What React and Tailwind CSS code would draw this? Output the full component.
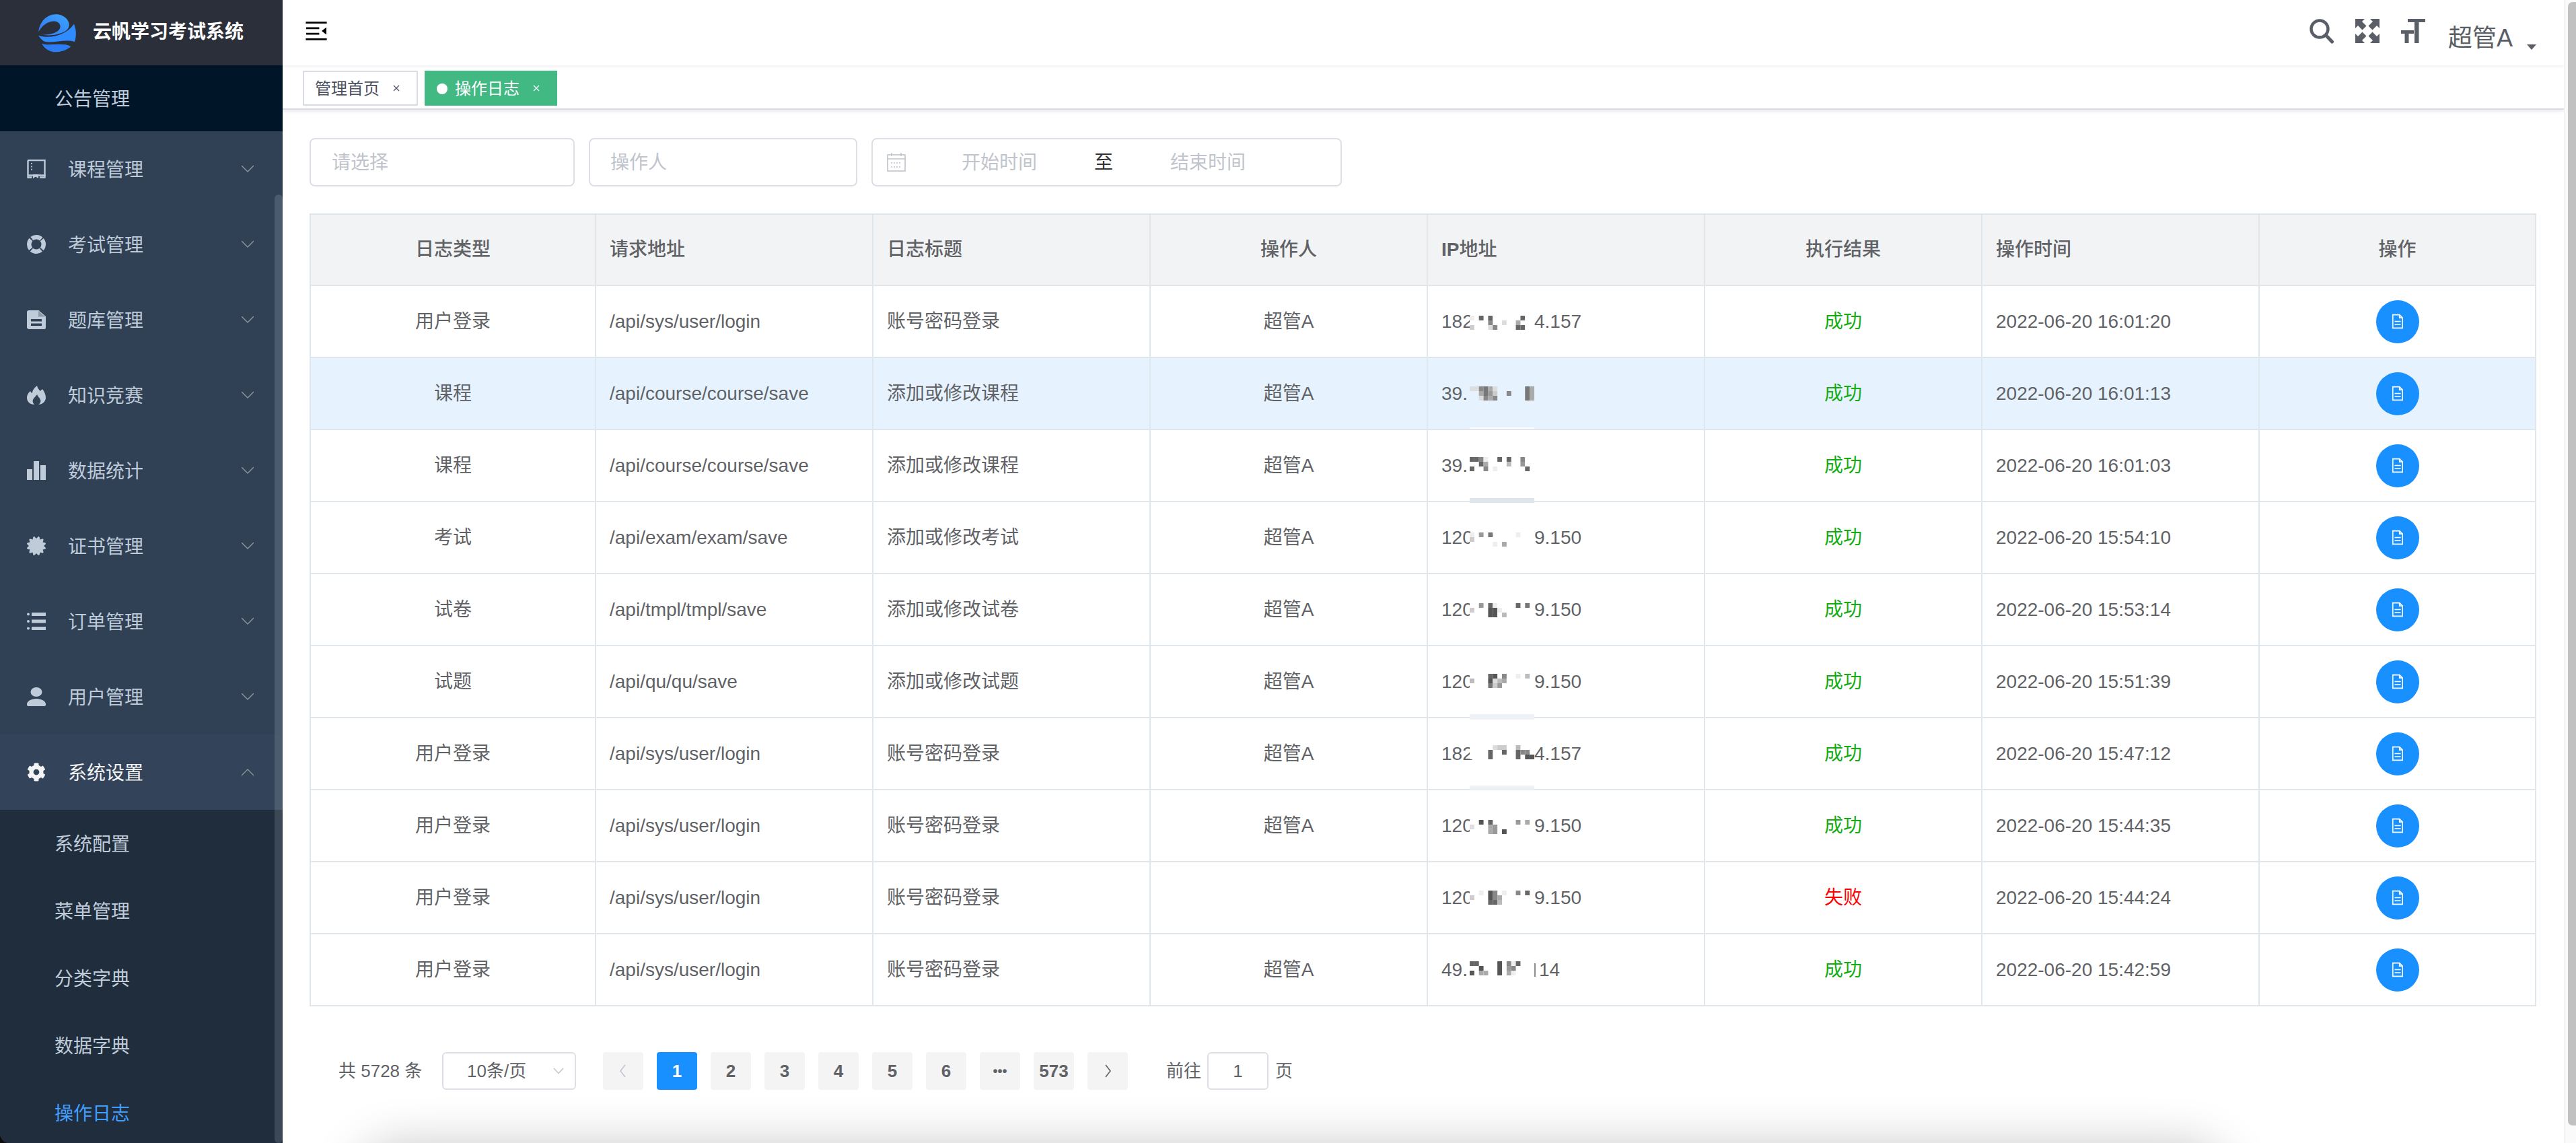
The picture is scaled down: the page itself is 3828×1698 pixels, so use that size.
import React from "react";
import { FaCertificate, FaCog } from "react-icons/fa";

const Chevron = ({ up }) => (
  <svg width="18" height="12" viewBox="0 0 18 12" fill="none" stroke="#909399" strokeWidth="1.4">
    <polyline points={up ? "0,11 9,2 18,11" : "0,1 9,10 18,1"} />
  </svg>
);

const IconBook = () => (
  <svg width="28" height="28" viewBox="0 0 28 28" fill="none" stroke="#bfcbd9" strokeWidth="2.4">
    <path d="M1.5 24V2.5a1.5 1.5 0 0 1 1.5-1.5h23.500v22.500H1.500" />
    <path d="M7 5v13" strokeDasharray="2 2.4" strokeWidth="1.8" />
    <path d="M9 22h8v6l-4-2.400L9 28z" fill="#bfcbd9" stroke="none" />
    <path d="M1.500 24v2.500h6M19 26.500h7.500V23" />
  </svg>
);
const IconExam = () => (
  <svg width="28" height="28" viewBox="0 0 28 28" fill="none" stroke="#bfcbd9" strokeWidth="6.5">
    <circle cx="14" cy="14" r="10.75" strokeDasharray="14.9 2" transform="rotate(-40 14 14)" />
  </svg>
);
const IconFile = () => (
  <svg width="28" height="28" viewBox="0 0 28 28" fill="#bfcbd9">
    <path fillRule="evenodd" d="M3 0h14.500L28 9v16.500a2.500 2.500 0 0 1-2.500 2.500h-22.500a3 3 0 0 1-3-2.500V3a3 3 0 0 1 3-3zM6 13v3.500h16V13zM6 19.500v3.500h16v-3.500z" />
    <path d="M17 1v8.500h10z" fill="#304156" opacity="0.35" />
  </svg>
);
const IconFire = () => (
  <svg width="28" height="28" viewBox="0 0 28 28" fill="#bfcbd9">
    <path d="M15 0C16 4 18 6 20 8C21 6.500 22 6 23 5C26 9 28 13 28 18C28 24 22 28 17.500 28C20 26 21 23 20 20.500C19 18 16 16 15 13C14 15 11 17 9 20.500C8 23 9 26 11 28C5 28 0 24 0 18C0 13 3 10 5 8C6 10 7 11 8 11C8 7 11 3 15 0Z" />
  </svg>
);
const IconBars = () => (
  <svg width="28" height="28" viewBox="0 0 28 28" fill="#bfcbd9">
    <rect x="0" y="12" width="8" height="17" />
    <rect x="10" y="0" width="8" height="29" />
    <rect x="20" y="6" width="8" height="23" />
  </svg>
);
const IconList = () => (
  <svg width="28" height="28" viewBox="0 0 28 28" fill="#bfcbd9">
    <circle cx="2" cy="3.5" r="2" />
    <circle cx="2" cy="14" r="2" />
    <circle cx="2" cy="24.5" r="2" />
    <rect x="7" y="1" width="21" height="5" />
    <rect x="7" y="11.5" width="21" height="5" />
    <rect x="7" y="22" width="21" height="5" />
  </svg>
);
const IconUser = () => (
  <svg width="28" height="28" viewBox="0 0 28 28" fill="#bfcbd9">
    <ellipse cx="14" cy="7" rx="8.500" ry="7" />
    <path d="M0 25c0-4 6-8 14-8s14 4 14 8v1a2 2 0 0 1-2 2H2a2 2 0 0 1-2-2z" />
  </svg>
);

const Logo = () => (
  <svg width="60" height="60" viewBox="50 20 180 180">
    <defs>
      <linearGradient id="lg1" x1="0" y1="1" x2="1" y2="0">
        <stop offset="0" stopColor="#2f74f0" />
        <stop offset="1" stopColor="#3fa6ff" />
      </linearGradient>
    </defs>
    <path d="M54 105C58 60 90 28 130 27C165 27 192 50 190 78C188 95 170 108 140 115C120 120 95 122 74 118C100 118 132 112 146 95C156 82 150 62 130 58C100 54 70 75 54 105Z" fill="url(#lg1)" />
    <path d="M54 121C100 136 172 125 212 70C224 100 222 125 215 149C170 135 110 160 76 146C66 138 58 130 54 121Z" fill="#2f8cff" />
    <path d="M68 157C100 170 160 150 198 170C180 186 155 195 130 195C105 195 80 180 68 157Z" fill="#2b7df5" />
  </svg>
);

const menu = [
  { t: "课程管理", i: <IconBook /> },
  { t: "考试管理", i: <IconExam /> },
  { t: "题库管理", i: <IconFile /> },
  { t: "知识竞赛", i: <IconFire /> },
  { t: "数据统计", i: <IconBars /> },
  { t: "证书管理", i: <FaCertificate size={28} color="#bfcbd9" /> },
  { t: "订单管理", i: <IconList /> },
  { t: "用户管理", i: <IconUser /> },
];

const Sidebar = () => (
  <div className="relative w-[420px] h-[1698px] shrink-0 bg-[#0c0c0c]">
    <div className="relative h-full overflow-hidden rounded-bl-[14px] bg-[#304156] text-[28px] text-[#bfcbd9]">
      <div className="h-[97px] bg-[#2b2f3a] flex items-center pl-[56px]">
        <Logo />
        <span className="ml-[22px] mb-[2px] text-white font-semibold text-[28px]">云帆学习考试系统</span>
      </div>
      <div className="h-[98px] bg-[#001528] flex items-center pl-[81px] pt-[3px]">公告管理</div>
      {menu.map((m) => (
        <div key={m.t} className="h-[112px] flex items-center pl-[40px] pr-[43px]">
          <span className="w-[28px] h-[28px] flex items-center justify-center">{m.i}</span>
          <span className="ml-[33px] flex-1 pt-[4px]">{m.t}</span>
          <Chevron />
        </div>
      ))}
      <div className="h-[112px] bg-[#32435a] flex items-center pl-[40px] pr-[43px] text-[#f4f4f5]">
        <span className="w-[28px] h-[28px] flex items-center justify-center">
          <FaCog size={28} color="#f4f4f5" />
        </span>
        <span className="ml-[33px] flex-1 pt-[4px]">系统设置</span>
        <Chevron up />
      </div>
      <div className="bg-[#1f2d3d]">
        {["系统配置", "菜单管理", "分类字典", "数据字典"].map((s) => (
          <div key={s} className="h-[100px] flex items-center pl-[81px] pt-[4px]">{s}</div>
        ))}
        <div className="h-[100px] flex items-center pl-[81px] pt-[4px] text-[#409eff]">操作日志</div>
      </div>
      <div className="absolute right-0 top-[289px] bottom-0 w-[12px] rounded-[6px] bg-white/13" />
    </div>
  </div>
);

const Navbar = () => (
  <div className="relative z-20 h-[97px] bg-white shadow-[0_2px_4px_rgba(0,21,41,0.06)] flex items-start justify-between pr-[41px]">
    <svg className="ml-[30px] mt-[26px] rotate-180" width="40" height="40" viewBox="0 0 1024 1024" fill="#000">
      <path d="M408 442h480c4.4 0 8-3.6 8-8v-56c0-4.4-3.6-8-8-8H408c-4.4 0-8 3.6-8 8v56c0 4.4 3.6 8 8 8zm-8 204c0 4.4 3.6 8 8 8h480c4.4 0 8-3.6 8-8v-56c0-4.4-3.6-8-8-8H408c-4.4 0-8 3.6-8 8v56zm504-486H120c-4.4 0-8 3.6-8 8v56c0 4.4 3.6 8 8 8h784c4.4 0 8-3.6 8-8v-56c0-4.4-3.6-8-8-8zm0 632H120c-4.4 0-8 3.6-8 8v56c0 4.4 3.6 8 8 8h784c4.4 0 8-3.6 8-8v-56c0-4.4-3.6-8-8-8zM142.4 642.1L298.7 519a8.84 8.84 0 0 0 0-13.9L142.4 381.9c-5.8-4.6-14.4-.5-14.4 6.9v246.3a8.9 8.9 0 0 0 14.4 7z" />
    </svg>
    <div className="flex items-start text-[#5a5e66]">
      <svg className="mt-[28px]" width="36" height="37" viewBox="0 0 36 37" fill="none" stroke="#5a5e66">
        <circle cx="15" cy="15" r="12.5" strokeWidth="4.4" />
        <line x1="24.5" y1="24.5" x2="33.5" y2="34" strokeWidth="5" strokeLinecap="round" />
      </svg>
      <svg className="mt-[28px] ml-[32px]" width="36" height="36" viewBox="0 0 36 36" fill="#5a5e66">
        {["", "translate(36 0) scale(-1 1)", "translate(0 36) scale(1 -1)", "translate(36 36) scale(-1 -1)"].map((tf, i) => (
          <g key={i} transform={tf}>
            <path d="M0 0h14L10 4l6.500 6.500-6 6L4 10 0 14z" />
          </g>
        ))}
      </svg>
      <svg className="mt-[28px] ml-[32px]" width="36" height="36" viewBox="0 0 36 36" fill="#5a5e66">
        <rect x="10" y="0" width="26" height="5" />
        <rect x="20" y="0" width="6.5" height="36" />
        <rect x="0" y="17" width="19" height="5" />
        <rect x="5.5" y="17" width="6" height="19" />
      </svg>
      <span className="mt-[39px] ml-[34px] text-[36px] leading-[36px]">超管A</span>
      <svg className="mt-[66px] ml-[21px]" width="14" height="8" viewBox="0 0 14 8" fill="#5a5e66">
        <path d="M0 0h14L7 8z" />
      </svg>
    </div>
  </div>
);

const TagX = ({ c }) => (
  <svg className="ml-[20px] mb-[2px]" width="10" height="10" viewBox="0 0 10 10" stroke={c} strokeWidth="1.2">
    <path d="M1 1l8 8M9 1L1 9" />
  </svg>
);

const Tags = () => (
  <div className="relative z-10 h-[66px] bg-white border-b-2 border-[#d8dce5] shadow-[0_2px_6px_rgba(0,0,0,0.1)] flex items-start pt-[8px] pl-[30px] text-[24px]">
    <div className="h-[52px] w-[171px] border-2 border-[#d8dce5] flex items-center pl-[16px] pt-[2px] text-[#495060]">
      管理首页
      <TagX c="#495060" />
    </div>
    <div className="ml-[10px] h-[52px] w-[197px] bg-[#42b983] flex items-center pl-[18px] pt-[2px] text-white">
      <span className="w-[16px] h-[16px] rounded-full bg-white mr-[11px]" />
      操作日志
      <TagX c="#ffffff" />
    </div>
  </div>
);

const CalendarIcon = () => (
  <svg width="30" height="30" viewBox="0 0 30 30" fill="none" stroke="#c0c4cc" strokeWidth="1.6">
    <rect x="2" y="4" width="26" height="24" />
    <path d="M2 10h26M8 1v5M22 1v5" />
    <path d="M7 16h16M7 22h16" strokeDasharray="2 2" />
  </svg>
);

const Filters = () => (
  <div className="flex items-start text-[28px] pl-[40px] mt-[42px]">
    <input readOnly placeholder="请选择" className="w-[394px] h-[72px] rounded-[8px] border-2 border-[#dcdfe6] pl-[31px] pt-[2px] outline-none placeholder:text-[#c0c4cc]" />
    <input readOnly placeholder="操作人" className="ml-[21px] w-[399px] h-[72px] rounded-[8px] border-2 border-[#dcdfe6] pl-[30px] pt-[2px] outline-none placeholder:text-[#c0c4cc]" />
    <div className="ml-[21px] w-[699px] h-[72px] rounded-[8px] border-2 border-[#dcdfe6] flex items-center pl-[20px]">
      <CalendarIcon />
      <span className="ml-[82px] pt-[2px] text-[#c0c4cc]">开始时间</span>
      <span className="ml-[85px] pt-[2px] text-[#303133]">至</span>
      <span className="ml-[85px] pt-[2px] text-[#c0c4cc]">结束时间</span>
    </div>
  </div>
);

const Mosaic = ({ rows, className }) => (
  <svg className={className} width="96" height="21" viewBox="0 0 98 21" preserveAspectRatio="none">
    {rows.flatMap((r, y) =>
      r.split("").map((ch, x) =>
        ch === "." ? null : (
          <rect key={`${x}-${y}`} x={x * 7} y={y * 7} width="7" height="7" fill={`#${ch}${ch}${ch}`} />
        )
      )
    )}
  </svg>
);

const LOGIN = "/api/sys/user/login";
const COURSE = "/api/course/course/save";
const data = [
  { k: "用户登录", u: LOGIN, t: "账号密码登录", a: "超管A", l: "182", r: "4.157", ok: 1, d: "16:01:20", top: "top-[44px]", m: ["e.6.6f.f...6f.", "f...8..d..a.f.", "cf..d8....66f."], s: "bottom-0 h-[2px] bg-white" },
  { k: "课程", u: COURSE, t: "添加或修改课程", a: "超管A", l: "39.", r: "", ok: 1, d: "16:01:13", top: "top-[42px]", m: ["dd87ad......7a", "..a79c..8...7a", "..d8a8......7a"], s: "bottom-0 h-[2px] bg-white", hl: 1 },
  { k: "课程", u: COURSE, t: "添加或修改课程", a: "超管A", l: "39.", r: "", ok: 1, d: "16:01:03", top: "top-[40px]", m: ["668e.f6.6..8f.", "..6a..f.b..9f.", "6..8.e.f....6."], s: "-bottom-[3px] h-[7px] bg-[#dfe6ec]" },
  { k: "考试", u: "/api/exam/exam/save", t: "添加或修改考试", a: "超管A", l: "120", r: "9.150", ok: 1, d: "15:54:10", top: "top-[45px]", m: ["e.9.7..f..e.f.", "c.............", ".f..fe.a......"], s: "bottom-0 h-[2px] bg-white" },
  { k: "试卷", u: "/api/tmpl/tmpl/save", t: "添加或修改试卷", a: "超管A", l: "120", r: "9.150", ok: 1, d: "15:53:14", top: "top-[43px]", m: ["..9.6e....6.7.", "c...55e.......", ".f..55fb......"], s: "bottom-0 h-[2px] bg-white" },
  { k: "试题", u: "/api/qu/qu/save", t: "添加或修改试题", a: "超管A", l: "120", r: "9.150", ok: 1, d: "15:51:39", top: "top-[41px]", m: ["....65.8..e.b.", "b...5dba......", "....7c9......."], s: "-bottom-[4px] h-[8px] bg-[#eef2f6]" },
  { k: "用户登录", u: LOGIN, t: "账号密码登录", a: "超管A", l: "182", r: "4.157", ok: 1, d: "15:47:12", top: "top-[40px]", m: [".....dcc..b...", "..f.6..6..688.", "....6.....6.55"], s: "-bottom-[1px] h-[6px] bg-[#eef2f6]" },
  { k: "用户登录", u: LOGIN, t: "账号密码登录", a: "超管A", l: "120", r: "9.150", ok: 1, d: "15:44:35", top: "top-[44px]", m: ["..5.6.....9.a.", "d...a9........", ".f..a9.5......"], s: "bottom-0 h-[2px] bg-white" },
  { k: "用户登录", u: LOGIN, t: "账号密码登录", a: "", l: "120", r: "9.150", ok: 0, d: "15:44:24", top: "top-[42px]", m: ["..e.58.e..8.6.", "c...58a.......", ".f..66b......."], s: "bottom-0 h-[2px] bg-white" },
  { k: "用户登录", u: LOGIN, t: "账号密码登录", a: "超管A", l: "49.", r: "14", bar: 1, ok: 1, d: "15:42:59", top: "top-[40px]", m: ["66...f5.8e6...", "..5..f5.98....", "5.aa..5.ae...."], s: "" },
];

const DocIcon = () => (
  <svg width="18" height="23" viewBox="0 0 20 24" fill="none" stroke="#fff" strokeWidth="1.8">
    <path d="M2 1h11l5 5v17H2z" />
    <path d="M13 1v5h5" />
    <path d="M5 12h10M5 17h10" />
  </svg>
);

const cell = "border-r-2 border-b-2 border-[#dfe6ec] p-0";

const LogTable = () => (
  <table className="ml-[40px] mt-[40px] w-[3309px] table-fixed border-separate border-spacing-0 border-l-2 border-t-2 border-[#dfe6ec] text-[28px] text-[#606266]">
    <colgroup>
      <col className="w-[424px]" />
      {[0, 1, 2, 3, 4, 5].map((i) => (
        <col key={i} className="w-[412px]" />
      ))}
      <col className="w-[411px]" />
    </colgroup>
    <thead>
      <tr className="h-[106px] bg-[#f2f3f5]">
        <th className={`${cell} text-center font-medium`}>日志类型</th>
        <th className={`${cell} text-left pl-[20px] font-medium`}>请求地址</th>
        <th className={`${cell} text-left pl-[20px] font-medium`}>日志标题</th>
        <th className={`${cell} text-center font-medium`}>操作人</th>
        <th className={`${cell} text-left pl-[20px] font-medium`}><span className="font-bold">IP</span>地址</th>
        <th className={`${cell} text-center font-medium`}>执行结果</th>
        <th className={`${cell} text-left pl-[20px] font-medium`}>操作时间</th>
        <th className={`${cell} text-center font-medium`}>操作</th>
      </tr>
    </thead>
    <tbody>
      {data.map((r, i) => (
        <tr key={i} className={r.hl ? "h-[107px] bg-[#e6f3ff]" : "h-[107px]"}>
          <td className={`${cell} text-center`}>{r.k}</td>
          <td className={`${cell} pl-[20px]`}>{r.u}</td>
          <td className={`${cell} pl-[20px]`}>{r.t}</td>
          <td className={`${cell} text-center`}>{r.a}</td>
          <td className={`${cell} relative pl-[20px]`}>
            <div className="flex items-center">
              <span className="w-[42px] whitespace-nowrap">{r.l}</span>
              <span className="w-[96px] shrink-0" />
              {r.bar ? <span className="w-[2px] h-[20px] mr-[5px] bg-[#8a8c91]" /> : null}
              <span>{r.r}</span>
            </div>
            <Mosaic rows={r.m} className={`absolute left-[62px] ${r.top} ${r.hl ? "" : "bg-white"}`} />
            {r.s ? <span className={`absolute z-10 left-[62px] w-[96px] ${r.s}`} /> : null}
          </td>
          <td className={`${cell} text-center ${r.ok ? "text-[#13ad13]" : "text-[#ff0000]"}`}>{r.ok ? "成功" : "失败"}</td>
          <td className={`${cell} pl-[20px]`}>2022-06-20 {r.d}</td>
          <td className={cell}>
            <div className="flex justify-center">
              <span className="w-[64px] h-[64px] rounded-full bg-[#1890ff] flex items-center justify-center">
                <DocIcon />
              </span>
            </div>
          </td>
        </tr>
      ))}
    </tbody>
  </table>
);

const PageBtn = ({ children, active, className = "" }) => (
  <span className={`w-[60px] h-[56px] rounded-[4px] flex items-center justify-center font-bold mr-[20px] ${active ? "bg-[#1890ff] text-white" : "bg-[#f4f4f5] text-[#606266]"} ${className}`}>
    {children}
  </span>
);

const Arrow = ({ left, c }) => (
  <svg width="14" height="22" viewBox="0 0 14 22" fill="none" stroke={c} strokeWidth="1.6">
    <polyline points={left ? "10,2 3,11 10,20" : "4,2 11,11 4,20"} />
  </svg>
);

const Pagination = () => (
  <div className="ml-[83px] mt-[68px] flex items-center h-[56px] text-[26px] text-[#606266]">
    <span className="w-[122px] whitespace-nowrap">共 5728 条</span>
    <div className="ml-[32px] w-[199px] h-[56px] rounded-[6px] border-2 border-[#dcdfe6] flex items-center pl-[35px] pr-[16px] justify-between">
      <span>10条/页</span>
      <svg width="16" height="10" viewBox="0 0 16 10" fill="none" stroke="#c0c4cc" strokeWidth="1.5">
        <polyline points="1,1 8,8.5 15,1" />
      </svg>
    </div>
    <div className="ml-[40px] flex items-center">
      <PageBtn><Arrow left c="#c0c4cc" /></PageBtn>
      <PageBtn active>1</PageBtn>
      <PageBtn>2</PageBtn>
      <PageBtn>3</PageBtn>
      <PageBtn>4</PageBtn>
      <PageBtn>5</PageBtn>
      <PageBtn>6</PageBtn>
      <PageBtn className="text-[20px]">•••</PageBtn>
      <PageBtn>573</PageBtn>
      <PageBtn><Arrow c="#606266" /></PageBtn>
    </div>
    <span className="ml-[37px]">前往</span>
    <input readOnly value="1" className="ml-[9px] w-[91px] h-[56px] rounded-[6px] border-2 border-[#dcdfe6] text-center outline-none" />
    <span className="ml-[10px]">页</span>
  </div>
);

export default function App() {
  return (
    <div className="relative w-[3828px] h-[1698px] overflow-hidden flex bg-white font-['Liberation_Sans','Noto_Sans_CJK_SC',sans-serif]">
      <Sidebar />
      <div className="relative w-[3390px] h-[1698px] overflow-hidden shrink-0">
        <Navbar />
        <Tags />
        <Filters />
        <LogTable />
        <Pagination />
        <div className="absolute left-[150px] w-[2700px] top-[1745px] h-[60px] shadow-[0_0_70px_45px_rgba(0,0,0,0.22)] rounded-[40px]" />
      </div>
      <div className="relative w-[18px] h-[1698px] bg-[#fafafa] border-l border-[#ececec]">
        <div className="absolute right-0 top-[3px] w-[12px] h-[1669px] rounded-l-[7px] bg-[#c1c1c1]" />
      </div>
    </div>
  );
}
